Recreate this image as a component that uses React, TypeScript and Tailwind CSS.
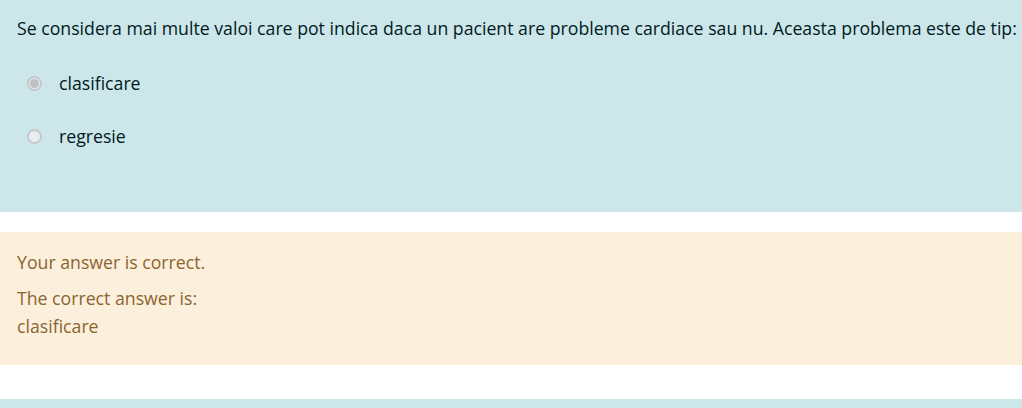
export default function App() {
  const options = [
    { label: "clasificare", checked: true },
    { label: "regresie", checked: false },
  ];

  return (
    <main
      className="w-[1022px] h-[408px] overflow-hidden bg-white"
      style={{ fontFamily: '"Open Sans", "Noto Sans", sans-serif' }}
    >
      {/* Question */}
      <div className="h-[212px] bg-[#cce6ea] text-[#001a1e] pl-[17px] pt-[14px] text-[17.7px] leading-[28px] whitespace-nowrap">
        <p>
          Se considera mai multe valoi care pot indica daca un pacient are probleme cardiace sau nu. Aceasta problema este de tip:
        </p>
        <div className="mt-[27px] flex flex-col gap-[25px]">
          {options.map((o) => (
            <label key={o.label} className="flex items-center h-[28px]">
              <span className="ml-[10px] w-[15px] h-[15px] rounded-full flex items-center justify-center border-2 border-[#c3c8ca] bg-[#e8eef0]">
                {o.checked && <span className="w-[9px] h-[9px] rounded-full bg-[#bcc0c2]" />}
              </span>
              <span className="ml-[17px]">{o.label}</span>
            </label>
          ))}
        </div>
      </div>

      {/* Feedback */}
      <div className="mt-[20px] h-[133px] bg-[#fcefdc] text-[#8a6530] pl-[17px] pt-[16px] text-[17.7px] leading-[28px]">
        <p className="mb-[8px]">Your answer is correct.</p>
        <p>
          The correct answer is:
          <br />
          clasificare
        </p>
      </div>

      <div className="mt-[34px] h-[20px] bg-[#cce6ea]" />
    </main>
  );
}
